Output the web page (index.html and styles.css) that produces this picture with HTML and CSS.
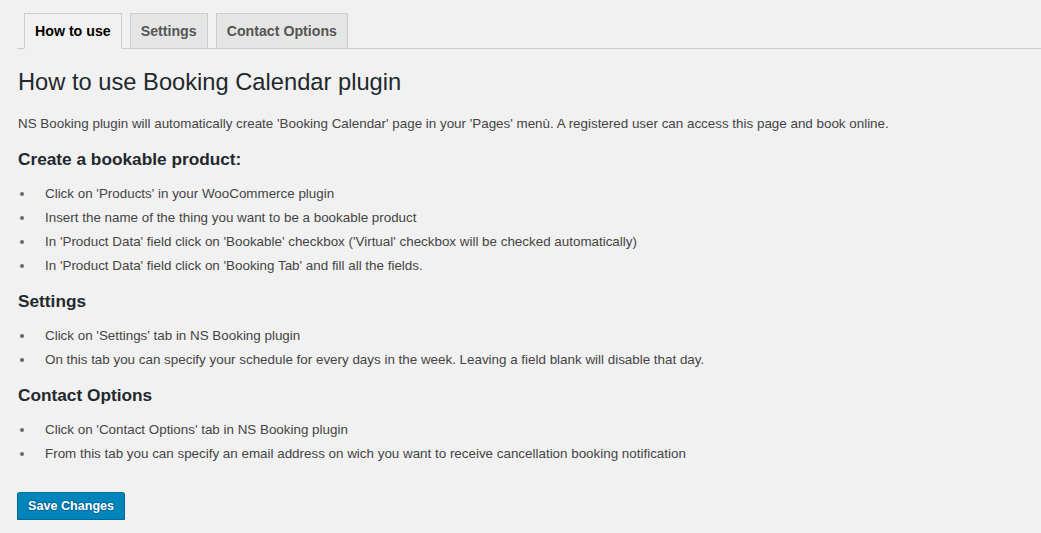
FILE: index.html
```html
<!DOCTYPE html>
<html lang="en">
<head>
<meta charset="utf-8">
<title>NS Booking – How to use</title>
<link rel="stylesheet" href="styles.css">
</head>
<body>
<div class="wrap">
  <nav class="tabs">
    <a class="tab active" href="#">How to use</a>
    <a class="tab" href="#">Settings</a>
    <a class="tab" href="#">Contact Options</a>
  </nav>
  <div class="content">
    <h1 class="title">How to use Booking Calendar plugin</h1>
    <p class="intro">NS Booking plugin will automatically create 'Booking Calendar' page in your 'Pages' menù. A registered user can access this page and book online.</p>

    <h2 class="section">Create a bookable product:</h2>
    <ul class="steps">
      <li>Click on 'Products' in your WooCommerce plugin</li>
      <li>Insert the name of the thing you want to be a bookable product</li>
      <li>In 'Product Data' field click on 'Bookable' checkbox ('Virtual' checkbox will be checked automatically)</li>
      <li>In 'Product Data' field click on 'Booking Tab' and fill all the fields.</li>
    </ul>

    <h2 class="section">Settings</h2>
    <ul class="steps">
      <li>Click on 'Settings' tab in NS Booking plugin</li>
      <li>On this tab you can specify your schedule for every days in the week. Leaving a field blank will disable that day.</li>
    </ul>

    <h2 class="section">Contact Options</h2>
    <ul class="steps">
      <li>Click on 'Contact Options' tab in NS Booking plugin</li>
      <li>From this tab you can specify an email address on wich you want to receive cancellation booking notification</li>
    </ul>
  </div>
  <div class="actions">
    <button class="btn-primary" type="button">Save Changes</button>
  </div>
</div>
</body>
</html>
```

FILE: styles.css
```css
html, body {
  margin: 0;
  padding: 0;
}

body {
  background: #f1f1f1;
  color: #444;
  font-family: "Liberation Sans", Arial, sans-serif;
  font-size: 13.4px;
  line-height: 1.4;
}

.wrap {
  padding: 13px 0 0 17px;
}

.tabs {
  display: flex;
  gap: 8px;
  padding-left: 7px;
  border-bottom: 1px solid #ccc;
}

.tab {
  display: block;
  padding: 5px 10px;
  border: 1px solid #ccc;
  border-bottom: none;
  background: #e5e5e5;
  color: #555;
  font-size: 14.2px;
  font-weight: 700;
  line-height: 24px;
  text-decoration: none;
}

.tab.active {
  background: #f1f1f1;
  color: #000;
  border-bottom: 1px solid #f1f1f1;
  margin-bottom: -1px;
}

.content {
  padding-left: 1px;
}

.title {
  margin: 19px 0 0;
  font-size: 23.7px;
  font-weight: 400;
  line-height: 29px;
  color: #23282d;
}

.intro {
  margin: 17px 0 0;
  line-height: 19px;
}

.section {
  margin: 15px 0 0;
  font-size: 17.25px;
  font-weight: 700;
  line-height: 22px;
  color: #23282d;
}

.steps {
  list-style: none;
  margin: 15px 0 0;
  padding: 0;
}

.steps li {
  display: flex;
  line-height: 18px;
  margin-bottom: 6px;
}

.steps li::before {
  content: "";
  flex: none;
  width: 4px;
  height: 4px;
  margin: 7px 21px 0 2px;
  border-radius: 50%;
  background: #666;
}

.actions {
  margin-top: 29px;
}

.btn-primary {
  height: 28px;
  padding: 0 10px 1px;
  border: 1px solid;
  border-color: #0073aa #006799 #006799;
  border-radius: 3px;
  background: #0085ba;
  box-shadow: 0 1px 0 #006799;
  color: #fff;
  font-family: "Liberation Sans", Arial, sans-serif;
  font-size: 12.6px;
  font-weight: 700;
  line-height: 26px;
  text-shadow: 0 -1px 1px #006799, 1px 0 1px #006799, 0 1px 1px #006799, -1px 0 1px #006799;
  cursor: pointer;
}
```
